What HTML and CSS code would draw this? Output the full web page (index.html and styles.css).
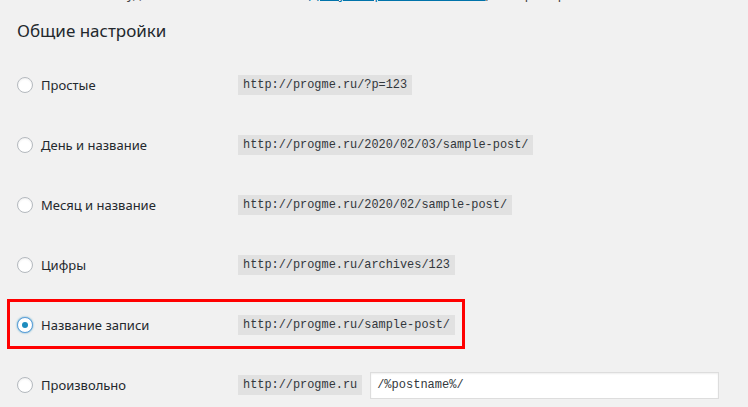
FILE: index.html
```html
<!DOCTYPE html>
<html lang="ru">
<head>
<meta charset="utf-8">
<title>Постоянные ссылки</title>
<link rel="stylesheet" href="styles.css">
</head>
<body>
<div class="page">
  <div class="intro">
    <p><span class="intro-before">удобство и совместимость.</span><a href="#">Доступны различные метки</a><span class="intro-after">, вот примеры.</span></p>
  </div>
  <h2 class="title">Общие настройки</h2>
  <div class="options">
    <div class="row">
      <label class="opt"><span class="radio"></span>Простые</label>
      <code class="url">http://progme.ru/?p=123</code>
    </div>
    <div class="row">
      <label class="opt"><span class="radio"></span>День и название</label>
      <code class="url">http://progme.ru/2020/02/03/sample-post/</code>
    </div>
    <div class="row">
      <label class="opt"><span class="radio"></span>Месяц и название</label>
      <code class="url">http://progme.ru/2020/02/sample-post/</code>
    </div>
    <div class="row">
      <label class="opt"><span class="radio"></span>Цифры</label>
      <code class="url">http://progme.ru/archives/123</code>
    </div>
    <div class="row row-selected">
      <label class="opt"><span class="radio radio-checked"></span>Название записи</label>
      <code class="url">http://progme.ru/sample-post/</code>
    </div>
    <div class="row">
      <label class="opt"><span class="radio"></span>Произвольно</label>
      <div class="custom">
        <code class="url">http://progme.ru</code>
        <input class="field" type="text" value="/%postname%/">
      </div>
    </div>
  </div>
</div>
</body>
</html>
```
FILE: styles.css
```css
html, body {
  margin: 0;
  padding: 0;
  background: #f1f1f1;
}
body {
  font-family: "Noto Sans", "Open Sans", sans-serif;
  color: #23282d;
  overflow: hidden;
  height: 407px;
}
.page {
  padding-left: 17px;
}
.intro {
  height: 3px;
  overflow: hidden;
  display: flex;
  align-items: flex-end;
}
.intro p {
  margin: 0;
  font-size: 13px;
  line-height: 17px;
  white-space: nowrap;
  padding-left: 110px;
  color: #444;
  display: flex;
}
.intro-before {
  width: 182px;
  flex: none;
}
.intro a {
  color: #0073aa;
  flex: none;
}
.intro-after {
  flex: none;
}
.title {
  margin: 17px 0 0 0;
  font-size: 17px;
  font-weight: 400;
  line-height: 22px;
  height: 35px;
}
.options {
  display: flex;
  flex-direction: column;
}
.row {
  height: 60px;
  display: grid;
  grid-template-columns: 221px 1fr;
  align-items: center;
  position: relative;
}
.row-selected::after {
  content: "";
  position: absolute;
  left: -10px;
  top: 4px;
  width: 452px;
  height: 44px;
  border: 3px solid #ff0000;
  pointer-events: none;
}
.opt {
  display: flex;
  align-items: center;
  gap: 8px;
  font-size: 13px;
  color: #23282d;
}
.radio {
  width: 14px;
  height: 14px;
  border: 1px solid #b4b9be;
  border-radius: 50%;
  background: #fff;
  box-shadow: inset 0 1px 2px rgba(0,0,0,.07);
  display: flex;
  align-items: center;
  justify-content: center;
  flex: none;
}
.radio-checked {
  border-color: #5b9dd9;
  box-shadow: 0 0 2px rgba(30,140,190,.8);
}
.radio-checked::before {
  content: "";
  width: 6px;
  height: 6px;
  border-radius: 50%;
  background: #1e8cbe;
}
.url {
  justify-self: start;
  font-family: "Liberation Mono", "DejaVu Sans Mono", monospace;
  font-size: 11.9px;
  line-height: 15px;
  padding: 3px 5px 2px;
  background: #e1e1e1;
  color: #32373c;
}
.custom {
  display: flex;
  align-items: center;
  gap: 8px;
}
.field {
  width: 349px;
  height: 27px;
  box-sizing: border-box;
  border: 1px solid #ddd;
  box-shadow: inset 0 1px 2px rgba(0,0,0,.07);
  background: #fff;
  font-family: "Liberation Mono", "DejaVu Sans Mono", monospace;
  font-size: 12px;
  color: #32373c;
  padding: 0 6px;
  margin: 0;
  outline: none;
}
```
